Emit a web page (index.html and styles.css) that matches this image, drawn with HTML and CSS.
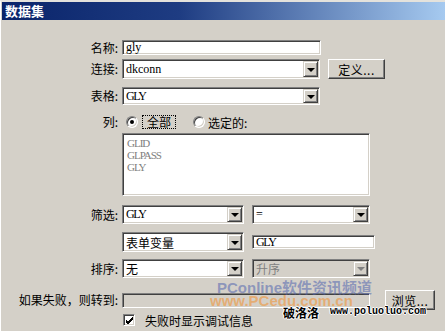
FILE: index.html
```html
<!DOCTYPE html>
<html lang="zh-CN">
<head>
    <meta charset="UTF-8">
    <title>数据集</title>
    <link rel="stylesheet" href="styles.css">
</head>
<body>
<div class="win">
    <div class="titlebar">数据集</div>

    <div class="form">
        <div class="row r-name">
            <span class="lbl">名称:</span>
            <div class="field w-full h15"><span class="mono">gly</span></div>
        </div>

        <div class="row r-conn">
            <span class="lbl">连接:</span>
            <div class="field select w-sel h20">
                <span class="mono">dkconn</span>
                <span class="drop"><i class="tri"></i></span>
            </div>
            <button class="btn btn-def">定义...</button>
        </div>

        <div class="row r-table">
            <span class="lbl">表格:</span>
            <div class="field select w-sel h18">
                <span class="mono caps">GLY</span>
                <span class="drop"><i class="tri"></i></span>
            </div>
        </div>

        <div class="row r-cols">
            <span class="lbl">列:</span>
            <span class="radio on"></span>
            <span class="focus">全部</span>
            <span class="radio second"></span>
            <span class="radio-text">选定的:</span>
        </div>

        <div class="row r-list">
            <span class="lbl"></span>
            <div class="field listbox">
                <div class="mono caps item">GLID</div>
                <div class="mono caps item">GLPASS</div>
                <div class="mono caps item">GLY</div>
            </div>
        </div>

        <div class="row r-filter">
            <span class="lbl">筛选:</span>
            <div class="field select w-half h19">
                <span class="mono caps">GLY</span>
                <span class="drop"><i class="tri"></i></span>
            </div>
            <div class="field select w-half2 h19 gap8">
                <span class="mono">=</span>
                <span class="drop"><i class="tri"></i></span>
            </div>
        </div>

        <div class="row r-var">
            <span class="lbl"></span>
            <div class="field select w-half h20">
                <span class="cjk">表单变量</span>
                <span class="drop"><i class="tri"></i></span>
            </div>
            <div class="field w-gly h14 gap8"><span class="mono caps">GLY</span></div>
        </div>

        <div class="row r-sort">
            <span class="lbl">排序:</span>
            <div class="field select w-half h19">
                <span class="cjk">无</span>
                <span class="drop"><i class="tri"></i></span>
            </div>
            <div class="field select disabled w-half2 h19 gap8">
                <span class="cjk">升序</span>
                <span class="drop"><i class="tri"></i></span>
            </div>
        </div>

        <div class="row r-goto">
            <span class="lbl">如果失败，则转到:</span>
            <div class="field disabled w-list h15"></div>
            <button class="btn btn-browse">浏览...</button>
        </div>

        <div class="row r-check">
            <span class="lbl"></span>
            <span class="check">
                <svg width="9" height="9" viewBox="0 0 9 9"><path d="M1 4 L3 6 L8 1 M1 5 L3 7 L8 2 M1 6 L3 8 L8 3" stroke="#000" stroke-width="1" fill="none"/></svg>
            </span>
            <span class="check-text">失败时显示调试信息</span>
        </div>
    </div>

    <!-- watermarks over the screenshot -->
    <div class="wm wm-pconline">PConline软件资讯频道</div>
    <div class="wm wm-pcedu">www.PCedu.com.cn</div>
    <div class="wm wm-poluo">破洛洛</div>
    <div class="wm wm-poluourl">www.poluoluo.com</div>
</div>
</body>
</html>
```

FILE: styles.css
```css
body {
    margin: 0;
    background-color: #d4d0c8;
    font-family: "Noto Sans CJK SC", sans-serif;
    font-size: 12px;
    color: #000;
}
.win {
    position: relative;
    width: 445px;
    height: 331px;
    box-sizing: border-box;
    border-top: 2px solid #e4e2dc;
    border-left: 1px solid #ffffff;
    padding-left: 1px;
    overflow: hidden;
}
.titlebar {
    height: 18px;
    line-height: 17px;
    padding-left: 3px;
    background: linear-gradient(to right, #0a246a 0%, #1e3c82 40%, #a6caf0 100%);
    color: #fff;
    font-weight: bold;
    font-size: 13px;
}
.row {
    display: flex;
    align-items: center;
}
.lbl {
    width: 116px;
    margin-right: 4px;
    text-align: right;
    white-space: nowrap;
    line-height: 14px;
}
.mono {
    font-family: "Liberation Serif", serif;
    font-size: 12px;
}
.mono.caps {
    font-size: 12px;
    letter-spacing: -1.3px;
}
.cjk {
    font-size: 12px;
}

/* row spacing */
.r-name { margin-top: 20px; height: 15px; }
.r-conn { margin-top: 4px; height: 20px; }
.r-table { margin-top: 8px; height: 18px; }
.r-cols { margin-top: 9px; height: 16px; }
.r-list { margin-top: 3px; align-items: flex-start; }
.r-filter { margin-top: 9px; height: 19px; }
.r-var { margin-top: 8px; height: 20px; }
.r-sort { margin-top: 7px; height: 19px; }
.r-goto { margin-top: 12px; height: 20px; }
.r-check { margin-top: 3px; height: 14px; }

/* sunken field */
.field {
    position: relative;
    box-sizing: border-box;
    display: flex;
    align-items: center;
    background: #fff;
    border: 1px solid;
    border-color: #808080 #ffffff #ffffff #808080;
    box-shadow: inset 1px 1px #404040, inset -1px -1px #d4d0c8;
    padding-left: 3px;
    overflow: hidden;
}
.field.disabled {
    background: #d4d0c8;
    color: #808080;
}
.w-full { width: 199px; }
.w-sel { width: 198px; }
.w-half { width: 122px; }
.w-half2 { width: 118px; }
.w-gly { width: 123px; }
.w-list { width: 248px; }
.h14 { height: 14px; }
.h15 { height: 15px; }
.h18 { height: 18px; }
.h19 { height: 19px; }
.h20 { height: 20px; }
.gap8 { margin-left: 8px; }

.select .drop {
    position: absolute;
    right: 1px;
    top: 1px;
    bottom: 1px;
    width: 15px;
    box-sizing: border-box;
    background: #d4d0c8;
    border: 1px solid;
    border-color: #d4d0c8 #404040 #404040 #d4d0c8;
    box-shadow: inset 1px 1px #fff, inset -1px -1px #808080;
    display: flex;
    align-items: center;
    justify-content: center;
}
.tri {
    width: 0;
    height: 0;
    border-left: 4px solid transparent;
    border-right: 4px solid transparent;
    border-top: 4px solid #000;
    margin-top: 1px;
}
.disabled .tri {
    border-top-color: #808080;
}

/* raised buttons */
.btn {
    box-sizing: border-box;
    height: 20px;
    padding: 0;
    font-family: "Noto Sans CJK SC", sans-serif;
    font-size: 12px;
    background: #d4d0c8;
    color: #000;
    border: 1px solid;
    border-color: #ffffff #404040 #404040 #ffffff;
    box-shadow: inset -1px -1px #808080;
    letter-spacing: 0.5px;
}
.btn-def {
    width: 57px;
    margin-left: 8px;
}
.btn-browse {
    width: 50px;
    margin-left: 15px;
}

/* radio buttons */
.radio {
    position: relative;
    width: 12px;
    height: 12px;
    box-sizing: border-box;
    border-radius: 50%;
    background: #fff;
    border: 1px solid;
    border-color: #808080 #ffffff #ffffff #808080;
    box-shadow: inset 1px 1px #404040, inset -1px -1px #d4d0c8;
    margin-left: 4px;
}
.radio.on::after {
    content: "";
    position: absolute;
    left: 3px;
    top: 3px;
    width: 4px;
    height: 4px;
    border-radius: 50%;
    background: #000;
}
.radio.second {
    margin-left: 17px;
}
.focus {
    margin-left: 4px;
    padding: 0 4px;
    border: 1px dotted #000;
    line-height: 12px;
}
.radio-text {
    margin-left: 3px;
}

.listbox {
    flex-direction: column;
    align-items: flex-start;
    width: 248px;
    height: 63px;
    padding: 3px 0 0 4px;
    color: #808080;
}
.listbox .item {
    height: 12px;
    line-height: 12px;
    font-size: 11px;
    letter-spacing: -1px;
}

/* checkbox */
.check {
    box-sizing: border-box;
    width: 12px;
    height: 12px;
    margin-left: 1px;
    background: #fff;
    border: 1px solid;
    border-color: #808080 #ffffff #ffffff #808080;
    box-shadow: inset 1px 1px #404040, inset -1px -1px #d4d0c8;
    display: flex;
    align-items: center;
    justify-content: center;
}
.check-text {
    margin-left: 10px;
    font-size: 12px;
}

/* watermarks */
.wm {
    position: absolute;
    white-space: nowrap;
}
.wm-pconline {
    left: 216px;
    top: 274px;
    font-family: "Liberation Sans", "Noto Sans CJK SC", sans-serif;
    font-weight: bold;
    font-size: 15px;
    color: rgba(80, 100, 175, 0.55);
}
.wm-pcedu {
    left: 209px;
    top: 290px;
    font-family: "Liberation Sans", sans-serif;
    font-weight: bold;
    font-size: 15px;
    color: rgba(240, 150, 60, 0.6);
}
.wm-poluo {
    left: 282px;
    top: 302px;
    font-size: 12px;
    font-weight: bold;
    color: #000;
    text-shadow: 1px 0 #fff, -1px 0 #fff, 0 1px #fff, 0 -1px #fff;
}
.wm-poluourl {
    left: 329px;
    top: 304px;
    font-family: "Liberation Mono", monospace;
    font-size: 10px;
    font-weight: bold;
    color: #000;
    text-shadow: 1px 0 #fff, -1px 0 #fff, 0 1px #fff, 0 -1px #fff;
}
```
